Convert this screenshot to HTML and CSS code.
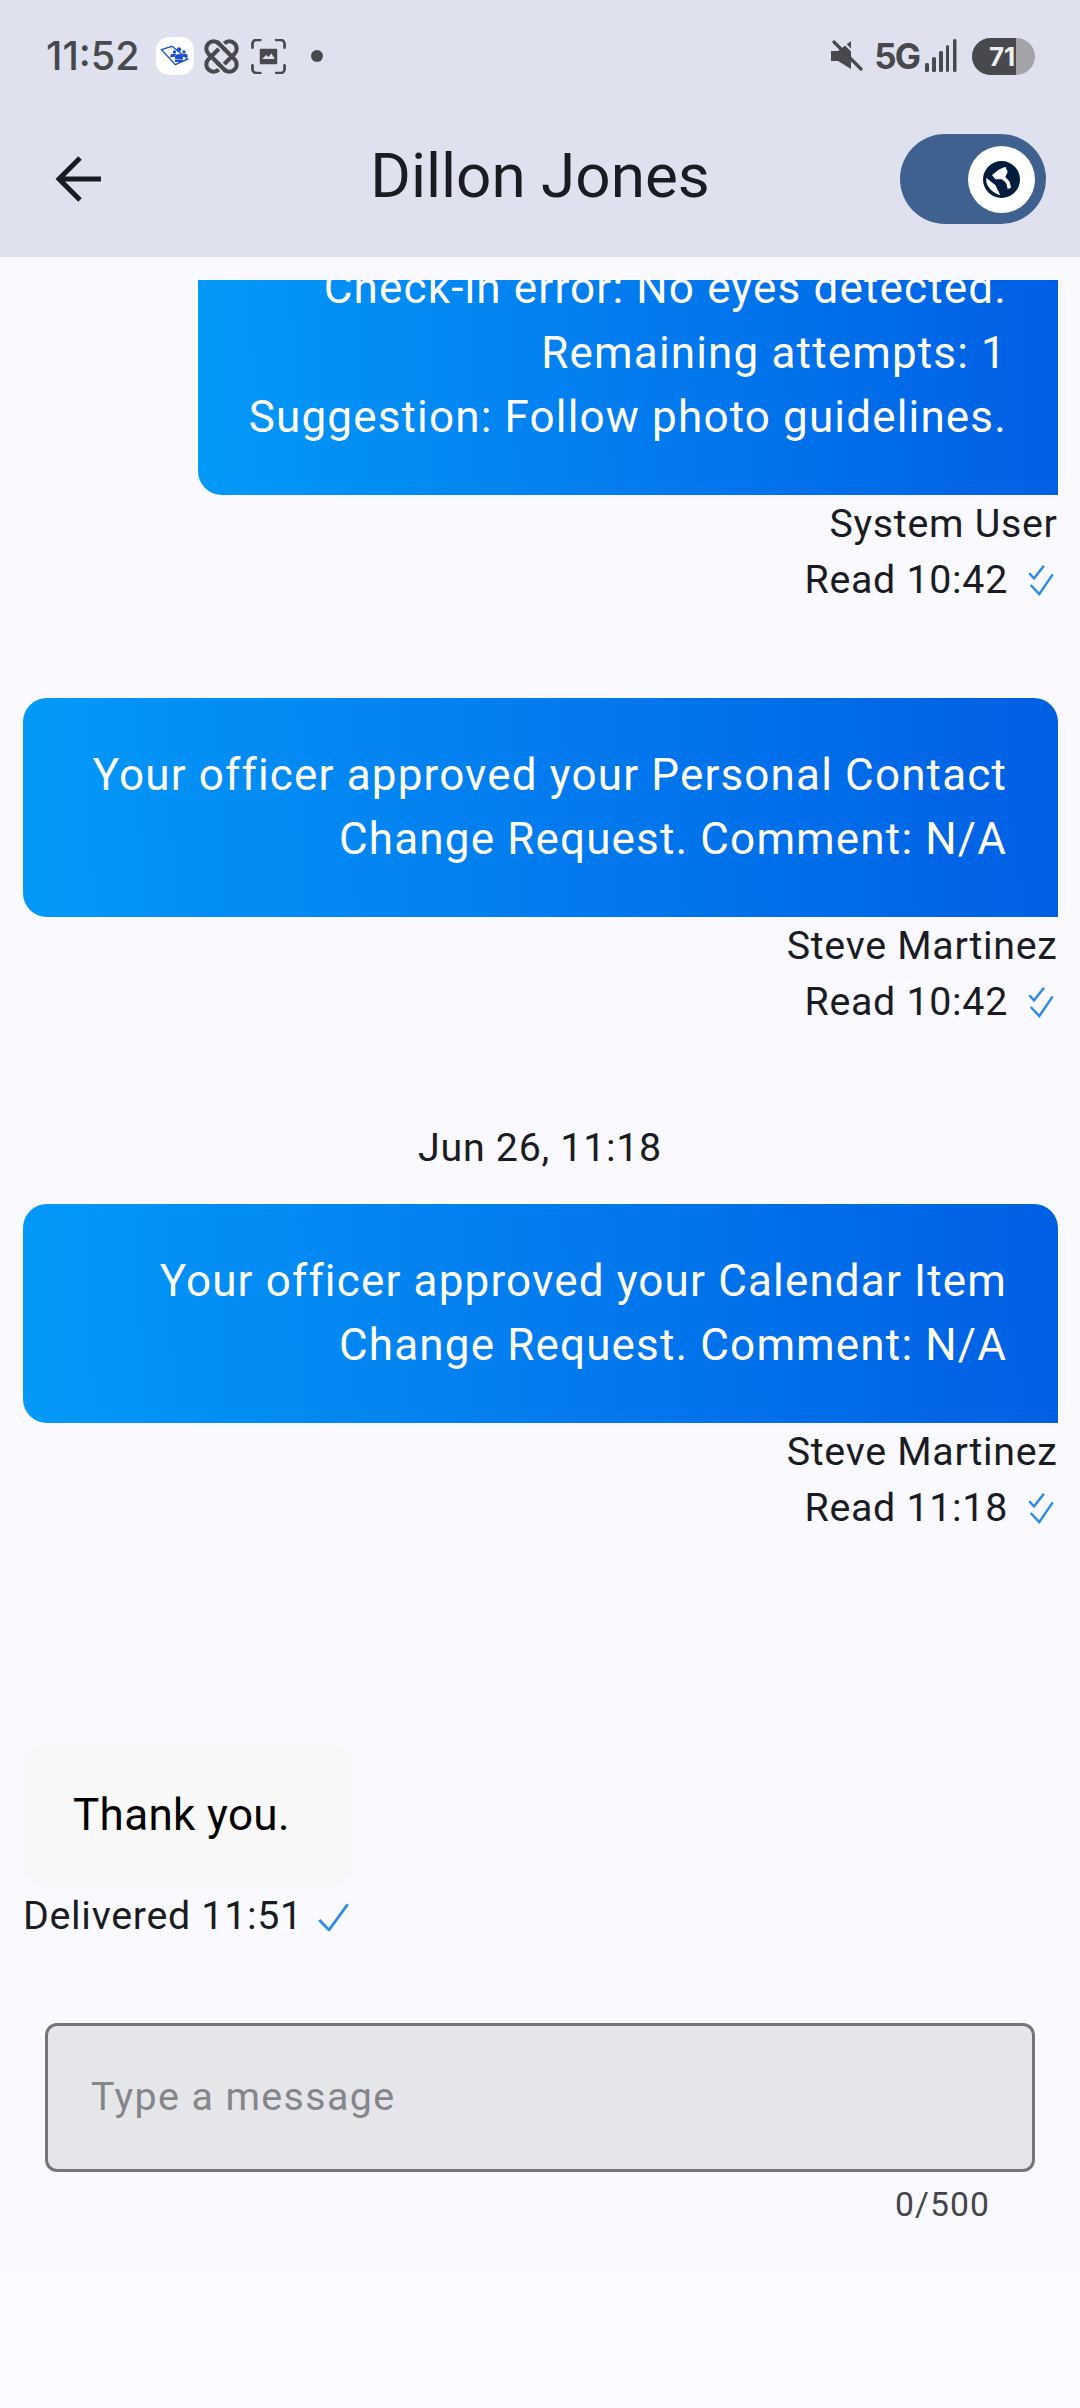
FILE: index.html
```html
<!DOCTYPE html>
<html lang="en">
<head>
<meta charset="utf-8">
<title>Dillon Jones</title>
<link rel="stylesheet" href="styles.css">
</head>
<body>
<div class="screen">
  <header class="top">
    <div class="status">
      <div class="status-left">
        <span class="clock">11:52</span>
        <span class="app-badge">
          <svg viewBox="0 0 38 38" width="38" height="38"><path d="M5.500 12.700 L16 9.300 L31.700 22 L19.300 27.700 Z" fill="none" stroke="#1a4fd0" stroke-width="1.400"/><g fill="#1a4fd0"><circle cx="23" cy="12.500" r="2.200"/><circle cx="28" cy="15" r="1.700"/><circle cx="18.500" cy="15" r="1.700"/><path d="M19 21a4 4 0 0 1 8 0v1h-8z"/><path d="M26 17h5l1 3h-5z"/><path d="M15 17h5l-1 3h-5z"/><path d="M19 22.500h8v2.500h-8z"/></g></svg>
        </span>
        <svg class="st-icon st-link" viewBox="0 0 36 36" width="35" height="35"><g fill="none" stroke="#48494d" stroke-width="4.200"><rect x="-19" y="-7.500" width="38" height="15" rx="7.500" transform="translate(18 18) rotate(45)"/><rect x="-19" y="-7.500" width="38" height="15" rx="7.500" transform="translate(18 18) rotate(-45)"/><g transform="translate(18 18) rotate(45)"><path d="M-11 -7.500H-4M4 7.500H11" stroke="#dfe2ee" stroke-width="8"/><path d="M-14 -7.500H-2M2 7.500H14"/></g></g></svg>
        <svg class="st-icon st-shot" viewBox="0 0 36 36" width="35" height="35"><g fill="none" stroke="#48494d" stroke-width="2.800" stroke-linecap="round"><path d="M1.500 9V5a4 4 0 0 1 4-4h4"/><path d="M26 1h4.500a4 4 0 0 1 4 4v4"/><path d="M34.500 27v4a4 4 0 0 1-4 4H26"/><path d="M9.500 35h-4a4 4 0 0 1-4-4v-4"/></g><path d="M10 10h16a1 1 0 0 1 1 1v14a1 1 0 0 1-1 1H10a1 1 0 0 1-1-1V11a1 1 0 0 1 1-1z" fill="#48494d"/><path d="M11.500 20.500l4-4 2.500 2 3-3.500 3.500 5.500z" fill="#dfe2ee"/></svg>
        <span class="st-dot"></span>
      </div>
      <div class="status-right">
        <svg class="mute" viewBox="0 0 32 32" width="32" height="32"><path d="M0 11h7L20 1v28L7 21H0z" fill="#48494d"/><path d="M3 -2 L34 29" stroke="#dfe2ee" stroke-width="2" transform="translate(3 -2)"/><path d="M3 2 L30 29" stroke="#48494d" stroke-width="3.200" stroke-linecap="round"/></svg>
        <span class="net">5G</span>
        <svg class="bars" viewBox="0 0 32 34" width="32" height="34"><g fill="#48494d"><rect x="0" y="24" width="4" height="9" rx="1.500"/><rect x="7" y="18" width="4" height="15" rx="1.500"/><rect x="14" y="12" width="4" height="21" rx="1.500"/><rect x="21" y="6" width="3" height="27" rx="1.500"/><rect x="28" y="0" width="3.500" height="33" rx="1.500"/></g></svg>
        <span class="battery"><span class="battery-fill"></span><span class="battery-num">71</span></span>
      </div>
    </div>
    <div class="appbar">
      <svg class="back" viewBox="0 0 46 46" width="46" height="46"><path d="M3 23 H46 M25 2 L4 23 L25 44" fill="none" stroke="#1a1c22" stroke-width="5"/></svg>
      <h1 class="title">Dillon Jones</h1>
      <span class="toggle">
        <span class="knob">
          <svg viewBox="0 0 37 37" width="37" height="37"><circle cx="18.500" cy="18.500" r="18.500" fill="#001d3d"/><path d="M22.300 5.700 L16 8.500 L9 14 L12.300 18.300 L19 18.300 L23.300 22.300 L24.700 28 L28 26.700 L26.700 20.700 L22.300 16 L24.700 10.700 Z" fill="#fff"/><path d="M3.300 16.700 L8 20.700 L12.300 24 L17.300 34 C12 33 5 28 3.300 21 Z" fill="#fff"/></svg>
        </span>
      </span>
    </div>
  </header>

  <main class="chat">
    <div class="list">
      <section class="msg">
        <div class="bubble bubble-clip">
          <p>Check-in error: No eyes detected.</p>
          <p>Remaining attempts: 1</p>
          <p>Suggestion: Follow photo guidelines.</p>
        </div>
        <div class="meta-name">System User</div>
        <div class="meta-read">Read 10:42 <svg class="ticks" viewBox="0 0 26 32" width="26" height="32"><use href="#double-tick"/></svg></div>
      </section>
      <section class="msg msg-second">
        <div class="bubble">
          <p>Your officer approved your Personal Contact</p>
          <p>Change Request. Comment: N/A</p>
        </div>
        <div class="meta-name">Steve Martinez</div>
        <div class="meta-read">Read 10:42 <svg class="ticks" viewBox="0 0 26 32" width="26" height="32"><use href="#double-tick"/></svg></div>
      </section>
      <div class="date">Jun 26, 11:18</div>
      <section class="msg">
        <div class="bubble">
          <p>Your officer approved your Calendar Item</p>
          <p>Change Request. Comment: N/A</p>
        </div>
        <div class="meta-name">Steve Martinez</div>
        <div class="meta-read">Read 11:18 <svg class="ticks" viewBox="0 0 26 32" width="26" height="32"><use href="#double-tick"/></svg></div>
      </section>
      <section class="mine">
        <div class="mine-bubble">Thank you.</div>
        <div class="mine-meta">Delivered 11:51 <svg viewBox="0 0 32 30" width="32" height="30"><path d="M1.300 19 L11 29 L29.700 3.300" fill="none" stroke="#2a8be8" stroke-width="2.800"/></svg></div>
      </section>
    </div>
    <div class="composer">
      <div class="field"><span class="placeholder">Type a message</span></div>
      <div class="counter">0/500</div>
    </div>
  </main>
  <footer class="bottom"></footer>
</div>
<svg class="defs" width="0" height="0" aria-hidden="true"><defs><g id="double-tick" fill="none" stroke="#2a8be8" stroke-width="2.400"><path d="M1.300 9.300 L6 14.300 L16 1.700"/><path d="M2.700 21 L11.300 30 L24.700 10.300"/></g></defs></svg>
</body>
</html>
```
FILE: styles.css
```css
* { box-sizing: border-box; }
html, body { margin: 0; padding: 0; }
body { width: 1080px; height: 2408px; overflow: hidden; font-family: Roboto, "Noto Sans", sans-serif; background: #f9f9ff; color: #1a1c22; }
.screen { width: 1080px; height: 2408px; display: flex; flex-direction: column; overflow: hidden; }
.defs { display: block; height: 0; }

.top { height: 257px; background: #dfe2ee; flex: none; display: flex; flex-direction: column; }
.status { height: 113px; flex: none; display: flex; justify-content: space-between; padding: 37px 45px 0 46px; align-items: flex-start; }
.status-left { display: flex; align-items: center; height: 38px; }
.clock { font-family: Inter, Roboto, sans-serif; font-weight: 500; font-size: 39.500px; color: #48494d; width: 110px; }
.app-badge { width: 38px; height: 38px; border-radius: 13px; background: #fff; display: block; }
.app-badge svg { display: block; }
.st-icon { display: block; flex: none; }
.st-link { margin-left: 10px; }
.st-shot { margin-left: 12px; }
.st-dot { width: 12px; height: 12px; background: #48494d; border-radius: 50%; margin-left: 25px; }
.status-right { display: flex; align-items: center; height: 38px; }
.mute { display: block; }
.net { font-family: Inter, Roboto, sans-serif; font-weight: 700; font-size: 35px; color: #48494d; margin-left: 11px; letter-spacing: -2px; }
.bars { margin-left: 6px; display: block; }
.battery { position: relative; width: 63px; height: 37px; border-radius: 19px; background: #a2a4aa; margin-left: 15px; overflow: hidden; display: block; }
.battery-fill { position: absolute; left: 0; top: 0; bottom: 0; width: 44px; background: #48494d; }
.battery-num { position: absolute; left: 17px; top: 0; line-height: 37px; font-family: Inter, Roboto, sans-serif; font-weight: 700; font-size: 26px; color: #eceef2; }

.appbar { height: 144px; flex: none; display: grid; grid-template-columns: 1fr auto 1fr; align-items: center; padding: 0 34px 12px; }
.back { display: block; margin-left: 21px; }
.title { margin: 0 0 6px; font-weight: 400; font-size: 62px; line-height: 72px; color: #1a1c22; }
.toggle { justify-self: end; width: 146px; height: 90px; border-radius: 45px; background: #3f618f; display: flex; justify-content: flex-end; align-items: center; padding-right: 11px; }
.knob { width: 67px; height: 67px; border-radius: 50%; background: #fff; display: flex; align-items: center; justify-content: center; }
.knob svg { display: block; }

.chat { flex: none; height: 2016px; display: flex; flex-direction: column; }
.list { margin-top: 23px; height: 1743px; overflow: hidden; flex: none; }
.msg { display: flex; flex-direction: column; align-items: flex-end; padding: 0 22.500px 0 23px; }
.msg-second { margin-top: 90px; }
.bubble { width: 100%; border-radius: 24px 24px 0 24px; background: linear-gradient(88deg, #0499f9, #005fe3); padding: 45px 50.500px 45px 40px; color: #fff; text-align: right; font-size: 44px; line-height: 64.500px; letter-spacing: 1.160px; }
.bubble p { margin: 0; white-space: nowrap; }
.bubble-clip { width: 859.500px; margin-top: -68px; padding-top: 44px; }
.meta-name { font-size: 39.375px; line-height: 56px; letter-spacing: 0.700px; margin-top: 1px; }
.meta-read { font-size: 39.375px; line-height: 56px; letter-spacing: 0.700px; display: flex; align-items: center; gap: 20px; }
.ticks { display: block; margin-right: 3.500px; }
.date { text-align: center; font-size: 39.375px; letter-spacing: 0.700px; line-height: 56px; margin: 90px 0 28px; }
.mine { margin-top: 207px; padding-left: 23px; display: flex; flex-direction: column; align-items: flex-start; }
.mine-bubble { width: 330px; height: 145px; border-radius: 28px; background: #f8f8f8; color: #000; font-size: 44px; padding-left: 50px; line-height: 145px; letter-spacing: 0.350px; }
.mine-meta { font-size: 39.375px; line-height: 56px; letter-spacing: 0.700px; display: flex; align-items: center; gap: 15px; }

.composer { padding: 0 45px; flex: none; height: 250px; }
.field { height: 149px; border: 3px solid #74757b; border-radius: 12px; background: #e5e6ea; display: flex; align-items: center; padding: 0 0 2px 43px; }
.placeholder { font-size: 39.375px; letter-spacing: 1.400px; color: #85868b; }
.counter { text-align: right; margin-right: 45px; font-size: 33.700px; letter-spacing: 1.070px; line-height: 40px; margin-top: 13px; color: #45464b; }
.bottom { flex: 1; background: #fcfbff; }
```
